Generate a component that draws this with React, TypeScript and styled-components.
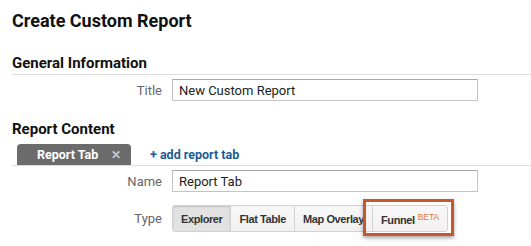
import styled, { createGlobalStyle } from "styled-components";

const GlobalStyle = createGlobalStyle`
  body {
    margin: 0;
    background: #fff;
    font-family: Roboto, "Liberation Sans", Arial, sans-serif;
    color: #222;
  }
`;

const Page = styled.div`
  box-sizing: border-box;
  min-height: 246px;
  padding: 10px 0 0 12px;
`;

const PageTitle = styled.h1`
  margin: 0;
  font-size: 18px;
  line-height: 22px;
  font-weight: 700;
  color: #111;
`;

const SectionTitle = styled.h2<{ $top: number; $rule?: boolean }>`
  margin: ${({ $top }) => $top}px 0 0;
  padding-bottom: 2px;
  font-size: 15px;
  line-height: 18px;
  font-weight: 700;
  color: #111;
  border-bottom: ${({ $rule }) => ($rule ? "1px solid #ddd" : "none")};
`;

const Row = styled.div<{ $top: number }>`
  display: flex;
  align-items: center;
  margin-top: ${({ $top }) => $top}px;
`;

const Label = styled.label`
  width: 150px;
  padding-right: 10px;
  text-align: right;
  font-size: 13px;
  color: #666;
`;

const TextInput = styled.input`
  box-sizing: border-box;
  width: 306px;
  height: 22px;
  padding: 0 6px;
  border: 1px solid #c4c4c4;
  border-top-color: #a8a8a8;
  font-family: Roboto, "Liberation Sans", Arial, sans-serif;
  font-size: 13px;
  color: #222;
  outline: none;
`;

const TabBar = styled.div`
  display: flex;
  align-items: flex-end;
  margin-top: 4px;
  border-bottom: 1px solid #ddd;
  height: 21px;
`;

const Tab = styled.div`
  display: flex;
  align-items: center;
  box-sizing: border-box;
  width: 114px;
  height: 21px;
  margin-left: 5px;
  padding-left: 20px;
  background: #6b6b6b;
  border-radius: 4px 4px 0 0;
  color: #fff;
  font-size: 12.5px;
  font-weight: 700;
`;

const Close = styled.span`
  margin-left: 13px;
  color: #c8c8c8;
  font-size: 12px;
`;

const AddTab = styled.a`
  align-self: center;
  margin-left: 19px;
  color: #1b5c98;
  font-size: 12.5px;
  font-weight: 700;
  text-decoration: none;
`;

const ButtonGroup = styled.div`
  display: flex;
`;

const TypeButton = styled.button<{ $active?: boolean }>`
  position: relative;
  box-sizing: border-box;
  height: 27px;
  padding: 0 8px;
  margin-left: -1px;
  border: 1px solid #d2d2d2;
  background: ${({ $active }) =>
    $active ? "#e2e2e2" : "linear-gradient(#f8f8f8, #f1f1f1)"};
  box-shadow: ${({ $active }) =>
    $active ? "inset 0 1px 2px rgba(0,0,0,0.15)" : "none"};
  font-family: "Liberation Sans", Arial, sans-serif;
  font-size: 11px;
  letter-spacing: -0.4px;
  font-weight: 700;
  color: #333;
  &:first-child {
    margin-left: 0;
    border-radius: 3px 0 0 3px;
  }
  &:last-child {
    border-radius: 0 3px 3px 0;
  }
`;

const Beta = styled.sup`
  margin-left: 3px;
  font-size: 8.5px;
  letter-spacing: 0;
  font-weight: 400;
  color: #e8743b;
  vertical-align: 4px;
`;

const Highlight = styled.span`
  position: absolute;
  left: -10px;
  right: -7px;
  top: -7px;
  bottom: -5px;
  border: 3px solid #c45a2c;
  box-shadow: 0 2px 4px rgba(0, 0, 0, 0.35);
  pointer-events: none;
`;

export default function App() {
  return (
    <Page>
      <GlobalStyle />
      <PageTitle>Create Custom Report</PageTitle>
      <SectionTitle $top={22} $rule>
        General Information
      </SectionTitle>
      <Row $top={4}>
        <Label>Title</Label>
        <TextInput defaultValue="New Custom Report" />
      </Row>
      <SectionTitle $top={19}>Report Content</SectionTitle>
      <TabBar>
        <Tab>
          Report Tab<Close>✕</Close>
        </Tab>
        <AddTab href="#">+ add report tab</AddTab>
      </TabBar>
      <Row $top={4}>
        <Label>Name</Label>
        <TextInput defaultValue="Report Tab" />
      </Row>
      <Row $top={13}>
        <Label>Type</Label>
        <ButtonGroup>
          <TypeButton $active>Explorer</TypeButton>
          <TypeButton>Flat Table</TypeButton>
          <TypeButton>Map Overlay</TypeButton>
          <TypeButton>
            Funnel<Beta>BETA</Beta>
            <Highlight />
          </TypeButton>
        </ButtonGroup>
      </Row>
    </Page>
  );
}
